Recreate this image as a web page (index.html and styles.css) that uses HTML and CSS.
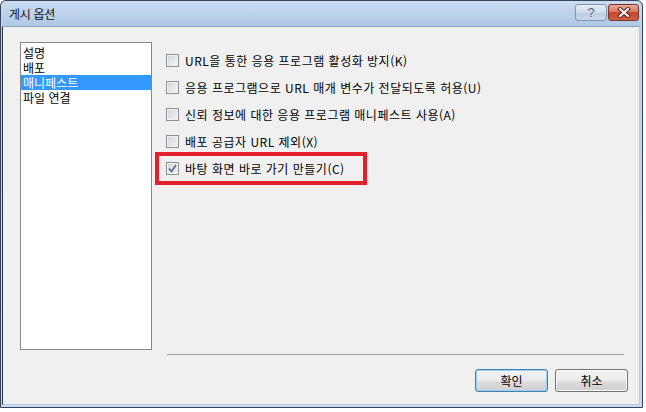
FILE: index.html
```html
<!DOCTYPE html>
<html lang="ko">

<head>
  <meta charset="UTF-8" />
  <title>게시 옵션</title>
  <link rel="stylesheet" href="styles.css">
</head>

<body>

  <div class="window">

    <!-- Barra de titulo -->
    <div class="titlebar">
      <span class="title">게시 옵션</span>
      <div class="caption-buttons">
        <span class="cap help">?</span>
        <span class="cap close">
          <svg width="14" height="11" viewBox="0 0 14 11">
            <path d="M3 2 L11 9 M11 2 L3 9" stroke="#5a2218" stroke-width="4" stroke-linecap="square" fill="none" />
            <path d="M3 2 L11 9 M11 2 L3 9" stroke="#ffffff" stroke-width="2" stroke-linecap="square" fill="none" />
          </svg>
        </span>
      </div>
    </div>

    <div class="client">
      <div class="main">
        <ul class="listbox">
          <li>설명</li>
          <li>배포</li>
          <li class="selected">매니페스트</li>
          <li>파일 연결</li>
        </ul>

        <div class="options">
          <label class="option"><span class="check"></span>URL을 통한 응용 프로그램 활성화 방지(K)</label>
          <label class="option"><span class="check"></span>응용 프로그램으로 URL 매개 변수가 전달되도록 허용(U)</label>
          <label class="option"><span class="check"></span>신뢰 정보에 대한 응용 프로그램 매니페스트 사용(A)</label>
          <label class="option"><span class="check"></span>배포 공급자 URL 제외(X)</label>
          <label class="option marked">
            <span class="check">
              <svg width="11" height="11" viewBox="0 0 11 11">
                <path d="M2 5.5 L4.5 8.5 L9 2" stroke="#4c6297" stroke-width="1.5" fill="none" />
              </svg>
            </span>바탕 화면 바로 가기 만들기(C)
          </label>
        </div>
      </div>

      <div class="separator"></div>

      <div class="actions">
        <span class="btn default">확인</span>
        <span class="btn">취소</span>
      </div>
    </div>

  </div>

</body>

</html>
```

FILE: styles.css
```css
body {
  margin: 0;
  background: #ffffff;
  font-family: "Noto Sans CJK KR", "Noto Sans", sans-serif;
  font-size: 12px;
  color: #000000;
}

.window {
  box-sizing: border-box;
  width: 643px;
  height: 408px;
  border: 1px solid #33445a;
  border-radius: 6px 6px 0 0;
  padding: 0 2px 2px 1px;
  background: linear-gradient(#c4d8ef, #bcd2ec 40px, #c8dbf0);
  display: flex;
  flex-direction: column;
}

.titlebar {
  height: 25px;
  display: flex;
  align-items: flex-start;
  background: linear-gradient(#c9dcf1, #afc8e5);
  border-radius: 5px 5px 0 0;
}

.title {
  margin: 4px 0 0 7px;
  line-height: 18px;
  color: #111;
  letter-spacing: -0.3px;
}

.caption-buttons {
  margin: 3px 1px 0 auto;
  display: flex;
  gap: 1px;
}

.cap {
  box-sizing: border-box;
  height: 17px;
  width: 32px;
  border-radius: 3px;
  display: flex;
  align-items: center;
  justify-content: center;
}

.help {
  border: 1px solid #8094b0;
  background: linear-gradient(#e4edf7, #cfdcec 50%, #bccde3 51%, #c9d9ec);
  color: #56677f;
  font-family: "Liberation Sans", sans-serif;
  font-size: 13px;
  line-height: 15px;
}

.close {
  width: 31px;
  border: 1px solid #7a3328;
  background: linear-gradient(#eaa999, #d87a66 45%, #c8452f 50%, #d0603e);
}

.client {
  flex: 1;
  background: #f0f0f0;
  border: 1px solid #b9cbe2;
  border-left-color: #2a3544;
  border-top-color: #8ea3bd;
  padding: 15px 11px 12px 17px;
  display: flex;
  flex-direction: column;
}

.main {
  display: flex;
  height: 308px;
}

.listbox {
  box-sizing: border-box;
  width: 132px;
  height: 308px;
  margin: 0;
  padding: 2px 0 0;
  list-style: none;
  background: #ffffff;
  border: 1px solid #828790;
}

.listbox li {
  height: 15px;
  line-height: 15px;
  padding-left: 2px;
}

.listbox li.selected {
  background: #3399ff;
  color: #ffffff;
}

.options {
  margin-left: 14px;
  padding-top: 5px;
  display: flex;
  flex-direction: column;
  align-items: flex-start;
  letter-spacing: 0.5px;
}

.option {
  height: 27px;
  display: flex;
  align-items: center;
  gap: 6px;
  white-space: nowrap;
}

.check {
  box-sizing: border-box;
  width: 13px;
  height: 13px;
  border: 1px solid #8f8f8f;
  background: linear-gradient(135deg, #d2d4d8, #f4f4f4);
  box-shadow: inset 0 0 0 1px #f3f3f3;
  display: flex;
  align-items: center;
  justify-content: center;
}

.marked {
  position: relative;
}

.marked::after {
  content: "";
  position: absolute;
  top: -3px;
  bottom: -3px;
  left: -11px;
  right: -22px;
  border: 4px solid #e3202b;
}

.separator {
  margin: 4px 4px 0 147px;
  border-top: 1px solid #a0a0a0;
}

.actions {
  margin-top: 14px;
  display: flex;
  justify-content: flex-end;
  gap: 7px;
}

.btn {
  box-sizing: border-box;
  width: 73px;
  height: 23px;
  border: 1px solid #707070;
  border-radius: 3px;
  background: linear-gradient(#f2f2f2, #ebebeb 50%, #dddddd 51%, #cfcfcf);
  box-shadow: inset 0 0 0 1px #fbfbfb;
  display: flex;
  align-items: center;
  justify-content: center;
}

.btn.default {
  border-color: #3c7fb1;
  box-shadow: inset 0 0 0 1px #9fd2f2;
}
```
